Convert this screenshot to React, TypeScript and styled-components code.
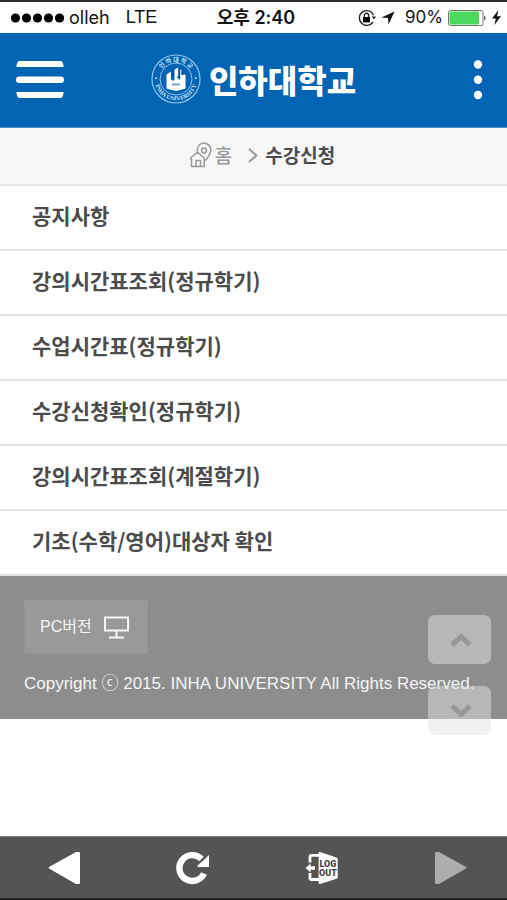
import React from "react";
import styled, { createGlobalStyle } from "styled-components";

const korean = `"Noto Sans CJK KR", sans-serif`;

const GlobalStyle = createGlobalStyle`
  * { box-sizing: border-box; }
  body { margin: 0; background: #fff; font-family: ${korean}; color: #444; }
  button { border: 0; padding: 0; background: none; color: inherit; font: inherit; cursor: pointer; }
  a { color: inherit; text-decoration: none; }
  svg { display: block; flex: none; }
`;

const Page = styled.div`
  min-height: 100vh;
  display: flex;
  flex-direction: column;
  border-top: 2px solid #2c2b2f;
`;

const StatusBar = styled.div`
  display: grid;
  grid-template-columns: 1fr auto 1fr;
  align-items: center;
  height: 31px;
  padding: 0 6px 0 11px;
  color: #151515;
  font: 18px/31px Inter, ${korean};
`;

const Carrier = styled.div`
  display: flex;
  align-items: center;
  gap: 5px;
`;

const Network = styled.span`
  margin-left: 11px;
  font-family: "Liberation Sans", sans-serif;
`;

const Clock = styled.time`
  font-weight: 600;
  font-size: 18px;
`;

const Indicators = styled.div`
  display: flex;
  align-items: center;
  justify-content: flex-end;
  gap: 5px;
`;

const Percent = styled.span`
  margin-left: 5px;
  font-size: 17px;
`;

const Header = styled.header`
  display: grid;
  grid-template-columns: 1fr auto 1fr;
  align-items: center;
  height: 95px;
  padding: 0 16px;
  background: #0264b2;
  border-bottom: 1px solid #4d93cb;
  color: #fff;
`;

const IconButton = styled.button<{ $end?: boolean }>`
  justify-self: ${(p) => (p.$end ? "end" : "start")};
`;

const Brand = styled.a`
  display: flex;
  align-items: center;
  gap: 8px;
  padding-bottom: 2px;
  font: 900 32px/44px ${korean};
`;

const Breadcrumb = styled.nav`
  display: flex;
  align-items: center;
  justify-content: center;
  height: 58px;
  padding: 0 0 2px 18px;
  background: #f7f7f7;
  border-bottom: 2px solid #e6e6e6;
  font: 500 19px/28px ${korean};
`;

const Crumb = styled.a`
  display: flex;
  align-items: center;
  gap: 3px;
  margin-right: 16px;
  color: #999;
`;

const Current = styled.span`
  margin-left: 7px;
  font-weight: 700;
  color: #4c4c4c;
`;

const Menu = styled.ul`
  list-style: none;
  margin: 0;
  padding: 0;
`;

const MenuItem = styled.li`
  border-bottom: 2px solid #e4e4e4;
`;

const MenuLink = styled.a`
  display: block;
  padding: 13px 32px 18px;
  font: 700 21px/32px ${korean};
  color: #4c4c4c;
`;

const Footer = styled.footer`
  position: relative;
  display: flex;
  flex-direction: column;
  align-items: flex-start;
  gap: 18px;
  padding: 24px 24px 23px;
  background: #8d8d8d;
  color: #f5f5f5;
`;

const PcButton = styled.button`
  display: flex;
  align-items: center;
  gap: 12px;
  height: 54px;
  padding: 0 18px 0 15px;
  background: #999;
  border: 1px solid #949494;
  font: 16px/24px "Liberation Sans", ${korean};
`;

const Copyright = styled.small`
  font: 17px/24px "Liberation Sans", ${korean};
`;

const Scrollers = styled.div`
  position: absolute;
  top: 39px;
  right: 16px;
  display: flex;
  flex-direction: column;
  gap: 22px;
`;

const Scroller = styled.button`
  display: grid;
  place-items: center;
  width: 63px;
  height: 49px;
  padding-left: 3px;
  border-radius: 7px;
  background: rgba(225, 225, 225, 0.5);
  color: rgba(120, 120, 120, 0.5);
`;

const Toolbar = styled.nav`
  display: flex;
  align-items: center;
  justify-content: space-between;
  height: 64px;
  margin-top: auto;
  padding: 0 40px 0 48px;
  background: #545454;
  border-top: 1px solid #808080;
  border-bottom: 2px solid #252525;
  color: #fff;
`;

const items = [
  "공지사항",
  "강의시간표조회(정규학기)",
  "수업시간표(정규학기)",
  "수강신청확인(정규학기)",
  "강의시간표조회(계절학기)",
  "기초(수학/영어)대상자 확인",
];

const Signal = () => (
  <svg width="53" height="10" fill="#000" aria-label="signal">
    {[4.5, 15.5, 26.5, 37.5, 48.5].map((x) => (
      <circle key={x} cx={x} cy="5" r="4.6" />
    ))}
  </svg>
);

const RotationLock = () => (
  <svg width="18" height="18" viewBox="0 0 18 18" fill="none" stroke="#222">
    <path d="M15.6 6.2A7.4 7.4 0 1 0 15 13" strokeWidth="1.4" />
    <path d="M13.8 7.4h4.2l-2 3.2z" fill="#222" stroke="none" />
    <rect x="5" y="8" width="7" height="5.4" fill="#000" stroke="none" />
    <path d="M6.4 8V6.4a2.1 2.1 0 0 1 4.2 0V8" strokeWidth="1.4" />
  </svg>
);

const Location = () => (
  <svg width="14" height="14" viewBox="0 0 14 14" fill="#111">
    <path d="M13.6.4 7.4 13.6 7 7 .4 6.6z" />
  </svg>
);

const Battery = () => (
  <svg width="39" height="16" viewBox="0 0 39 16">
    <rect x=".5" y=".5" width="34.5" height="15" rx="2" fill="#fff" stroke="#6e7a70" />
    <rect x="1.5" y="1.5" width="29.5" height="13" rx="1" fill="#4cd75d" />
    <path d="M36.4 5.4q2.4 2.6 0 5.2z" fill="#222" />
  </svg>
);

const Bolt = () => (
  <svg width="9" height="15" viewBox="0 0 9 15" fill="#111">
    <path d="M6.4 0 0 8.4h3.8L2.4 15 9 6.2H5.1z" />
  </svg>
);

const Emblem = () => (
  <svg width="50" height="50" viewBox="0 0 50 50" fill="none" stroke="#8fc3ea">
    <defs>
      <path id="arcTop" d="M7.6 25a17.4 17.4 0 0 1 34.8 0" />
      <path id="arcBottom" d="M3.6 25a21.4 21.4 0 0 0 42.8 0" />
    </defs>
    <circle cx="25" cy="25" r="24" strokeWidth="1.2" />
    <circle cx="25" cy="25" r="16" strokeWidth="1" />
    <g fill="#c8e3f7" stroke="none" textAnchor="middle">
      <text fontSize="6" fontWeight="700" fontFamily="Noto Sans CJK KR">
        <textPath href="#arcTop" startOffset="50%">인  하  대  학  교</textPath>
      </text>
      <text fontSize="6" fontWeight="700" fontFamily="Liberation Serif">
        <textPath href="#arcBottom" startOffset="50%">INHA UNIVERSITY</textPath>
      </text>
      <circle cx="5.2" cy="24" r="1" />
      <circle cx="44.8" cy="24" r="1" />
    </g>
    <path
      d="M15.5 20.5 20 17.5v7q0 2 2 2h1.5V15.5l4-2v12h1.7v-9.6l1.8-1v6l3.5-.4v14l-4.2 1.2L25 37l-5.3-1.3-4.2-1.2z"
      fill="#fff"
      stroke="none"
    />
    <path d="M22 15v5.5q0 2-2 2M28 14v7.5q0 2-2 2M31 14v7" stroke="#0b4f94" strokeWidth="1.3" />
    <path d="M21 30.5h8" stroke="#69a5d8" strokeWidth="2" />
  </svg>
);

const HomePin = () => (
  <svg width="22" height="26" viewBox="0 0 22 26" fill="none" stroke="#999" strokeWidth="1.5">
    <path d="M7.4 9.6C6.8 4.4 9.8 1 14 1s8 4.4 6.4 9.2c-.8 3-3.4 6.2-5.2 8.6" />
    <circle cx="14" cy="8.5" r="2.4" />
    <path d="M1 18v-2.5l6.5-5.3 6.7 5.8v8.5H1.5V16.5M6 24.5v-6h4.5v6" />
  </svg>
);

const Chevron = () => (
  <svg width="10" height="15" viewBox="0 0 10 15" fill="none" stroke="#999" strokeWidth="2">
    <path d="m1 1 7.4 6.5L1 14" />
  </svg>
);

const Monitor = () => (
  <svg width="25" height="23" viewBox="0 0 25 23" fill="none" stroke="#f5f5f5" strokeWidth="2">
    <path d="M1 1.5h23v13H1zM12.5 14.5V21M5 21.5h15" />
  </svg>
);

const Arrow = ({ down }: { down?: boolean }) => (
  <svg width="22" height="14" viewBox="0 0 22 14" fill="none" stroke="currentColor" strokeWidth="5">
    <path d={down ? "m2 2 9 8.4L20 2" : "m2 12 9-8.4 9 8.4"} />
  </svg>
);

const Reload = () => (
  <svg width="34" height="34" viewBox="0 0 34 34" fill="none">
    <path d="M28 22.5A12.9 12.9 0 1 1 25.5 8" stroke="#fff" strokeWidth="6.4" />
    <path d="M33 4v12H21.5v-1.5L29 8z" fill="#fff" />
  </svg>
);

const Logout = () => (
  <svg width="34" height="34" viewBox="0 0 34 34">
    <path d="M14 4.400H6.500Q5 4.400 5 6V11.500M14 28.500H6.500Q5 28.500 5 27V22" fill="none" stroke="#fff" strokeWidth="2.800" />
    <path d="M.6 17 5.500 12.600v2.600H10v3.600H5.500v2.600z" fill="#fff" />
    <path d="M13.600 2q0-1.400 1.500-1L31.500 6.600q1.200.4 1.200 1.600v18q0 1.200-1.200 1.600L15.100 33q-1.500.4-1.500-1z" fill="#fff" />
    <g fill="#484848" fontFamily="Roboto" fontWeight="900" fontSize="9" textAnchor="middle">
      <text x="23" y="16">LOG</text>
      <text x="23" y="24.500">OUT</text>
    </g>
  </svg>
);

const Triangle = ({ forward }: { forward?: boolean }) => (
  <svg width="33" height="34" viewBox="0 0 33 34" fill={forward ? "#adadad" : "#fff"}>
    <path
      d={
        forward
          ? "M1 2q0-1 1.2-1H5l27 15q1 .8 0 1.6L5 33H2.2Q1 33 1 32z"
          : "M32 2q0-1-1.2-1H28L1 16q-1 .8 0 1.6L28 33h2.8q1.2 0 1.2-1z"
      }
    />
  </svg>
);

export default function App() {
  return (
    <>
      <GlobalStyle />
      <Page>
        <StatusBar>
          <Carrier>
            <Signal />
            <span>olleh</span>
            <Network>LTE</Network>
          </Carrier>
          <Clock>오후 2:40</Clock>
          <Indicators>
            <RotationLock />
            <Location />
            <Percent>90%</Percent>
            <Battery />
            <Bolt />
          </Indicators>
        </StatusBar>

        <Header>
          <IconButton aria-label="메뉴">
            <svg width="48" height="38" viewBox="0 0 48 38" fill="#fff">
              <path d="M3 0h42q2.5 1 2.5 6H.5Q.5 1 3 0z" />
              <rect y="15.5" width="48" height="6.5" rx="3.2" />
              <path d="M.5 31h47q0 5-2.5 6H3Q.5 36 .5 31z" />
            </svg>
          </IconButton>
          <Brand href="#">
            <Emblem />
            인하대학교
          </Brand>
          <IconButton $end aria-label="더보기">
            <svg width="26" height="40" viewBox="0 0 26 40" fill="#fff">
              <circle cx="13" cy="4.5" r="4.2" />
              <circle cx="13" cy="19.8" r="4.2" />
              <circle cx="13" cy="35" r="4.2" />
            </svg>
          </IconButton>
        </Header>

        <Breadcrumb>
          <Crumb href="#">
            <HomePin />홈
          </Crumb>
          <Chevron />
          <Current>수강신청</Current>
        </Breadcrumb>

        <Menu>
          {items.map((label) => (
            <MenuItem key={label}>
              <MenuLink href="#">{label}</MenuLink>
            </MenuItem>
          ))}
        </Menu>

        <Footer>
          <PcButton>
            PC버전
            <Monitor />
          </PcButton>
          <Copyright>Copyright ⓒ 2015. INHA UNIVERSITY All Rights Reserved.</Copyright>
          <Scrollers>
            <Scroller aria-label="위로">
              <Arrow />
            </Scroller>
            <Scroller aria-label="아래로">
              <Arrow down />
            </Scroller>
          </Scrollers>
        </Footer>

        <Toolbar>
          <button aria-label="뒤로">
            <Triangle />
          </button>
          <button aria-label="새로고침">
            <Reload />
          </button>
          <button aria-label="로그아웃">
            <Logout />
          </button>
          <button aria-label="앞으로">
            <Triangle forward />
          </button>
        </Toolbar>
      </Page>
    </>
  );
}
